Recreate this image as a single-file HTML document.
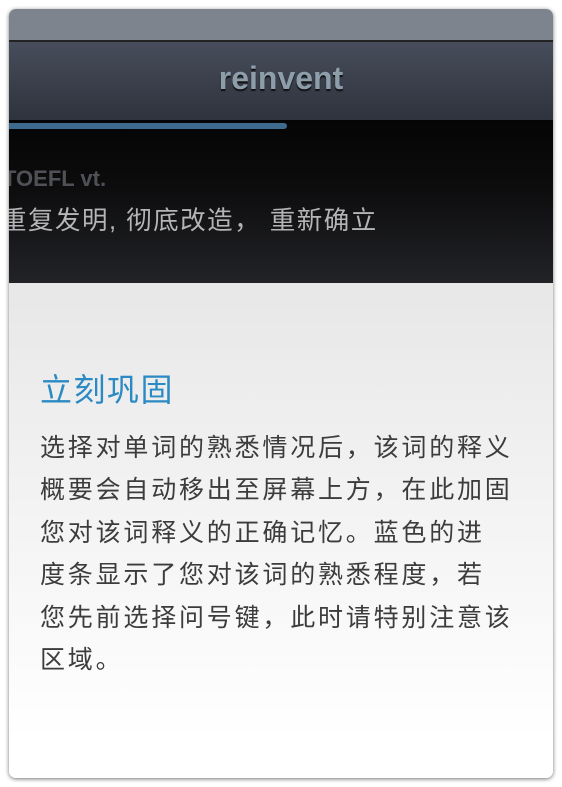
<!DOCTYPE html>
<html><head><meta charset="utf-8"><style>
html,body{margin:0;padding:0;background:#fff;width:562px;height:787px;overflow:hidden}
.card{position:absolute;left:9px;top:9px;width:544px;height:769px;border-radius:7px;overflow:hidden;box-shadow:0 1px 4px rgba(0,0,0,.55);background:linear-gradient(#e7e7e7 35%,#ffffff 95%)}
.top{position:absolute;left:0;top:0;width:544px;height:31px;background:#7e848d}
.line{position:absolute;left:0;top:31px;width:544px;height:2px;background:#222}
.nav{position:absolute;left:0;top:33px;width:544px;height:87px;background:linear-gradient(#474d5a,#2b303a)}
.nav span{position:absolute;left:0;right:0;top:18px;text-align:center;font:bold 32px "Liberation Sans",sans-serif;color:#8d9da9;text-shadow:0 2px 1px #111}
.dark{position:absolute;left:0;top:111px;width:544px;height:163px;background:linear-gradient(#050505,#0c0c0d 40%,#222327)}
.bar{position:absolute;left:0;top:114px;width:278px;height:6px;background:#3e6a8e;border-radius:0 3px 3px 0}
.w{position:absolute;left:-6px;top:157px;font:bold 22px "Liberation Sans",sans-serif;color:#4f5156}
.m{position:absolute;left:-8px;top:191px;font:25.5px "Liberation Sans","Noto Sans CJK SC",sans-serif;color:#b5b5b8;white-space:nowrap;letter-spacing:1.5px}
.t{position:absolute;left:31px;top:356px;font:32px "Liberation Sans","Noto Sans CJK SC",sans-serif;color:#2b8ac3;letter-spacing:1.5px}
.b{position:absolute;left:31px;top:418px;font:25px/42.4px "Liberation Sans","Noto Sans CJK SC",sans-serif;color:#3c3c3c;letter-spacing:2.8px;white-space:nowrap}
</style></head><body>
<div class="card">
<div class="top"></div><div class="line"></div>
<div class="nav"><span>reinvent</span></div>
<div class="dark"></div><div class="bar"></div>
<div class="w">TOEFL vt.</div>
<div class="m">重复发明, 彻底改造， 重新确立</div>
<div class="t">立刻巩固</div>
<div class="b">选择对单词的熟悉情况后，该词的释义<br>概要会自动移出至屏幕上方，在此加固<br>您对该词释义的正确记忆。蓝色的进<br>度条显示了您对该词的熟悉程度，若<br>您先前选择问号键，此时请特别注意该<br>区域。</div>
</div>
</body></html>
